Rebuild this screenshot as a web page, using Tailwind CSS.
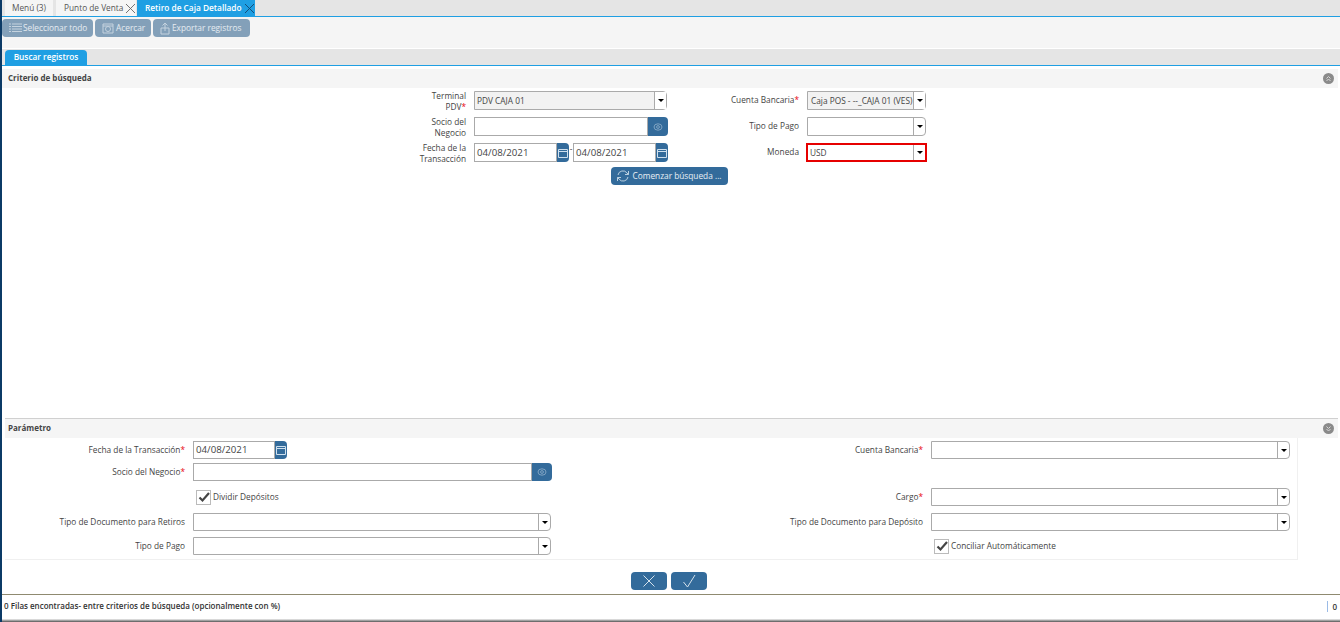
<!DOCTYPE html>
<html lang="es">
<head>
<meta charset="UTF-8">
<title>Retiro de Caja Detallado</title>
<script src="https://cdn.jsdelivr.net/npm/@tailwindcss/browser@4"></script>
</head>
<body class="bg-white font-['Open_Sans',sans-serif] text-[8.3px] text-[#333] overflow-hidden">
<div class="w-[1340px] h-[622px] flex flex-col border-l-2 border-[#0b3a66] relative">

  <!-- Window tabs -->
  <div class="h-[17px] bg-[#e5e5e5] border-b border-[#1f9fe3] flex items-end pl-[3px] shrink-0 whitespace-nowrap">
    <div class="h-4 w-[48px] bg-[#f5f5f5] flex items-center justify-center text-[#555]">Menú (3)</div>
    <div class="h-4 w-[80px] ml-[3px] bg-[#f5f5f5] flex items-center justify-between pl-2 text-[#555]">
      Punto de Venta
      <svg class="w-[11px] h-[11px]" viewBox="0 0 11 11" fill="none" stroke="#666" stroke-width="0.9"><path d="M1 1l9 9M10 1l-9 9"/></svg>
    </div>
    <div class="h-4 w-[118px] ml-px bg-[#1f9fe3] flex items-center justify-between pl-2 text-white font-semibold">
      Retiro de Caja Detallado
      <svg class="w-[11px] h-[11px]" viewBox="0 0 11 11" fill="none" stroke="#14466e" stroke-width="0.9"><path d="M1 1l9 9M10 1l-9 9"/></svg>
    </div>
  </div>

  <!-- Toolbar -->
  <div class="h-[32px] bg-[#f5f5f5] flex items-start pt-0.5 gap-0.5 shrink-0 text-white/80 border-b border-white whitespace-nowrap">
    <div class="h-[18px] w-[91px] bg-[#83a0b9] rounded-sm flex items-center pl-1.5 gap-px">
      <svg class="w-3.5 h-3.5" viewBox="0 0 14 14" fill="none" stroke="#c5d3df"><path d="M4 3h10M4 5.500h10M4 8h10M4 10.500h10M1 3h2M1 5.500h2M1 8h2M1 10.500h2"/></svg>
      Seleccionar todo
    </div>
    <div class="h-[18px] w-[56px] bg-[#83a0b9] rounded-sm flex items-center pl-1.5 gap-px">
      <svg class="w-3.5 h-3.5" viewBox="0 0 14 14" fill="none" stroke="#c5d3df"><path d="M2 3h10v9H2zM2 5h10"/><circle cx="7" cy="8" r="2.500"/></svg>
      Acercar
    </div>
    <div class="h-[18px] w-[97px] bg-[#83a0b9] rounded-sm flex items-center pl-[5px]">
      <svg class="w-3.5 h-3.5" viewBox="0 0 14 14" fill="none" stroke="#c5d3df"><path d="M3 7h8v6H3zM7 10V2M4.500 4.500L7 2l2.500 2.500"/></svg>
      Exportar registros
    </div>
  </div>

  <!-- Search tab -->
  <div class="h-[17px] bg-[#e5e5e5] border-b border-[#1f9fe3] flex items-end pl-[3px] shrink-0">
    <div class="h-[15px] w-[82px] bg-[#1f9fe3] rounded-t-sm flex items-center justify-center text-white font-semibold">Buscar registros</div>
  </div>

  <!-- Search criteria -->
  <div class="h-[352px] shrink-0 pt-[3px] pr-[2px]">
    <div class="h-[19px] bg-[#f5f5f5] flex items-center justify-between pl-1.5 pr-1 font-bold text-[8px] text-[#444]">
      <span class="-mt-px">Criterio de búsqueda</span>
      <span class="w-[11px] h-[11px] rounded-full bg-[#8a8a8a] flex items-center justify-center">
        <svg class="w-[7px] h-[7px]" viewBox="0 0 7 7" fill="none" stroke="#d8d8d8"><path d="M1.500 3.500L3.500 1.500l2 2M1.500 6L3.500 4l2 2"/></svg>
      </span>
    </div>
    <div class="pl-[408px] pt-[3px]">
      <div class="w-[516px] grid grid-cols-[56px_193px_124px_119px] gap-x-2 gap-y-[7px] auto-rows-[19px] items-center text-[#444]">
        <div class="text-right leading-[11px]">Terminal PDV<span class="text-red-600">*</span></div>
        <div class="h-[19px] flex border border-[#aaa] rounded-r-sm bg-[#f2f2f2]">
          <div class="flex-1 pl-0.5 leading-[17px]">PDV CAJA 01</div>
          <div class="w-3 bg-white border-l border-[#aaa] flex items-center justify-center"><span class="border-x-[3px] border-t-[3px] border-x-transparent border-t-black"></span></div>
        </div>
        <div class="text-right">Cuenta Bancaria<span class="text-red-600">*</span></div>
        <div class="h-[19px] flex border border-[#aaa] rounded-r-sm bg-[#f2f2f2]">
          <div class="flex-1 pl-[3px] leading-[17px] whitespace-nowrap overflow-hidden">Caja POS - --_CAJA 01 (VES)</div>
          <div class="w-3 bg-white border-l border-[#aaa] flex items-center justify-center"><span class="border-x-[3px] border-t-[3px] border-x-transparent border-t-black"></span></div>
        </div>

        <div class="text-right leading-[11px]">Socio del Negocio</div>
        <div class="h-[19px] flex w-[194px]">
          <div class="flex-1 border border-[#aaa] bg-white"></div>
          <div class="w-5 bg-[#336b9b] rounded-r-sm flex items-center justify-center">
            <svg class="w-2.5 h-2.5" viewBox="0 0 10 10" fill="none" stroke="#7fa3c2"><ellipse cx="5" cy="5" rx="4" ry="3.200"/><circle cx="5" cy="5" r="1.400"/></svg>
          </div>
        </div>
        <div class="text-right">Tipo de Pago</div>
        <div class="h-[19px] flex border border-[#aaa] rounded-r-sm bg-white">
          <div class="flex-1"></div>
          <div class="w-3 border-l border-[#aaa] flex items-center justify-center"><span class="border-x-[3px] border-t-[3px] border-x-transparent border-t-black"></span></div>
        </div>

        <div class="text-right leading-[11px]">Fecha de la Transacción</div>
        <div class="flex items-center w-[194px] h-[19px]">
          <div class="w-[83px] h-[19px] border border-[#aaa] pl-[2px] text-[9.7px] leading-[17px]">04/08/2021</div>
          <div class="w-3 h-[19px] bg-[#336b9b] rounded-r-sm flex items-center justify-center">
            <svg class="w-3 h-3" viewBox="0 0 12 12" fill="none" stroke="#cfe0ee"><path d="M1.500 2.500h9v8h-9zM1.500 4.500h9"/></svg>
          </div>
          <div class="w-[4px] text-center self-start leading-[12px]">-</div>
          <div class="w-[83px] h-[19px] border border-[#aaa] pl-[2px] text-[9.7px] leading-[17px]">04/08/2021</div>
          <div class="w-3 h-[19px] bg-[#336b9b] rounded-r-sm flex items-center justify-center">
            <svg class="w-3 h-3" viewBox="0 0 12 12" fill="none" stroke="#cfe0ee"><path d="M1.500 2.500h9v8h-9zM1.500 4.500h9"/></svg>
          </div>
        </div>
        <div class="text-right">Moneda</div>
        <div class="h-[19px] flex border-2 border-[#e60000] bg-white -mx-px">
          <div class="flex-1 pl-0.5 leading-[15px]">USD</div>
          <div class="w-3 border-l border-[#aaa] flex items-center justify-center"><span class="border-x-[3px] border-t-[3px] border-x-transparent border-t-black"></span></div>
        </div>
      </div>
    </div>
    <div class="flex justify-center pt-[5px] pr-[2px]">
      <div class="w-[117px] h-[18px] bg-[#336b9b] rounded-sm text-white/90 flex items-center justify-center gap-0.5">
        <svg class="w-3.5 h-3.5" viewBox="0 0 14 14" fill="none" stroke="#b9cfe0"><path d="M2 6a5 5 0 0 1 9-2l1.500 1.500M12 8a5 5 0 0 1-9 2l-1.500-1.500M12.500 2v3.500H9M1.500 12V8.500H5"/></svg>
        Comenzar búsqueda ...
      </div>
    </div>
  </div>

  <!-- Parameters -->
  <div class="pl-[3px] pr-[2px] shrink-0">
    <div class="h-5 bg-[#f5f5f5] border-t border-[#d0d0d0] flex items-center justify-between pl-[3px] pr-1 font-bold text-[8px] text-[#444]">
      <span class="-mt-px">Parámetro</span>
      <span class="w-[11px] h-[11px] rounded-full bg-[#8a8a8a] flex items-center justify-center">
        <svg class="w-[7px] h-[7px]" viewBox="0 0 7 7" fill="none" stroke="#d8d8d8"><path d="M1.500 1.500L3.500 3.500l2-2M1.500 4L3.500 6l2-2"/></svg>
      </span>
    </div>
    <div class="w-[1293px] h-[122px] border-r border-b border-[#f0f0f0] pt-[3px] text-[#444] flex flex-col">
      <div class="h-[18px] flex items-center">
        <div class="w-[180px] text-right">Fecha de la Transacción<span class="text-red-600">*</span></div>
        <div class="ml-2 w-[82px] h-[18px] border border-[#aaa] pl-[2px] text-[9.7px] leading-[16px]">04/08/2021</div>
        <div class="w-3 h-[18px] bg-[#336b9b] rounded-r-sm flex items-center justify-center">
          <svg class="w-3 h-3" viewBox="0 0 12 12" fill="none" stroke="#cfe0ee"><path d="M1.500 2.500h9v8h-9zM1.500 4.500h9"/></svg>
        </div>
        <div class="w-[636px] text-right">Cuenta Bancaria<span class="text-red-600">*</span></div>
        <div class="ml-2 w-[359px] h-[18px] flex border border-[#aaa] rounded-r-sm">
          <div class="flex-1"></div>
          <div class="w-3 border-l border-[#aaa] flex items-center justify-center"><span class="border-x-[3px] border-t-[3px] border-x-transparent border-t-black"></span></div>
        </div>
      </div>
      <div class="h-[18px] mt-1 flex items-center">
        <div class="w-[180px] text-right">Socio del Negocio<span class="text-red-600">*</span></div>
        <div class="ml-2 w-[339px] h-[18px] border border-[#aaa]"></div>
        <div class="w-5 h-[18px] bg-[#336b9b] rounded-r-sm flex items-center justify-center">
          <svg class="w-2.5 h-2.5" viewBox="0 0 10 10" fill="none" stroke="#7fa3c2"><ellipse cx="5" cy="5" rx="4" ry="3.200"/><circle cx="5" cy="5" r="1.400"/></svg>
        </div>
      </div>
      <div class="h-[18px] mt-[7px] flex items-center">
        <div class="w-[180px]"></div>
        <div class="ml-[11px] w-[15px] h-[15px] border border-[#bbb] flex items-center justify-center">
          <svg class="w-3 h-3" viewBox="0 0 12 12" fill="none" stroke="#444" stroke-width="2.200"><path d="M1.500 6.500l3 3L11 2"/></svg>
        </div>
        <div class="ml-[2px] w-[665px] pt-px">Dividir Depósitos</div>
        <div class="w-[45px] text-right pt-px">Cargo<span class="text-red-600">*</span></div>
        <div class="ml-2 w-[359px] h-[18px] flex border border-[#aaa] rounded-r-sm">
          <div class="flex-1"></div>
          <div class="w-3 border-l border-[#aaa] flex items-center justify-center"><span class="border-x-[3px] border-t-[3px] border-x-transparent border-t-black"></span></div>
        </div>
      </div>
      <div class="h-[18px] mt-[7px] flex items-center">
        <div class="w-[180px] text-right pt-px">Tipo de Documento para Retiros</div>
        <div class="ml-2 w-[358px] h-[18px] flex border border-[#aaa] rounded-r-sm">
          <div class="flex-1"></div>
          <div class="w-3 border-l border-[#aaa] flex items-center justify-center"><span class="border-x-[3px] border-t-[3px] border-x-transparent border-t-black"></span></div>
        </div>
        <div class="w-[372px] text-right pt-px">Tipo de Documento para Depósito</div>
        <div class="ml-2 w-[359px] h-[18px] flex border border-[#aaa] rounded-r-sm">
          <div class="flex-1"></div>
          <div class="w-3 border-l border-[#aaa] flex items-center justify-center"><span class="border-x-[3px] border-t-[3px] border-x-transparent border-t-black"></span></div>
        </div>
      </div>
      <div class="h-[18px] mt-1.5 flex items-center">
        <div class="w-[180px] text-right pt-px">Tipo de Pago</div>
        <div class="ml-2 w-[358px] h-[18px] flex border border-[#aaa] rounded-r-sm">
          <div class="flex-1"></div>
          <div class="w-3 border-l border-[#aaa] flex items-center justify-center"><span class="border-x-[3px] border-t-[3px] border-x-transparent border-t-black"></span></div>
        </div>
        <div class="ml-[383px] w-[15px] h-[15px] border border-[#bbb] flex items-center justify-center">
          <svg class="w-3 h-3" viewBox="0 0 12 12" fill="none" stroke="#444" stroke-width="2.200"><path d="M1.500 6.500l3 3L11 2"/></svg>
        </div>
        <div class="ml-[2px] pt-px">Conciliar Automáticamente</div>
      </div>
    </div>
  </div>

  <!-- Confirm buttons -->
  <div class="h-[34px] flex justify-center items-start pt-3 gap-[4px] pr-[4px] shrink-0">
    <div class="w-9 h-[18px] bg-[#336b9b] rounded-sm flex items-center justify-center">
      <svg class="w-3.5 h-3.5" viewBox="0 0 14 14" fill="none" stroke="#d5e2ec"><path d="M1.500 1.500l11 11M12.500 1.500l-11 11"/></svg>
    </div>
    <div class="w-9 h-[18px] bg-[#336b9b] rounded-sm flex items-center justify-center">
      <svg class="w-3.5 h-3.5" viewBox="0 0 14 14" fill="none" stroke="#d5e2ec"><path d="M1.500 8l4 5L13 1"/></svg>
    </div>
  </div>

  <!-- Status bar -->
  <div class="h-6 border-t border-[#8f8a70] flex items-center justify-between pl-[2px] pr-[3px] font-semibold text-[8px] text-[#333] shrink-0">
    <span class="-mt-px">0 Filas encontradas- entre criterios de búsqueda (opcionalmente con %)</span>
    <span class="border-l border-[#9bbbe6] pl-1 h-[11px] leading-[11px]">0</span>
  </div>
  <div class="absolute bottom-0 left-0 right-0 h-[3px] bg-gradient-to-b from-[#f5f5f5] to-[#555]"></div>
</div>
</body>
</html>
